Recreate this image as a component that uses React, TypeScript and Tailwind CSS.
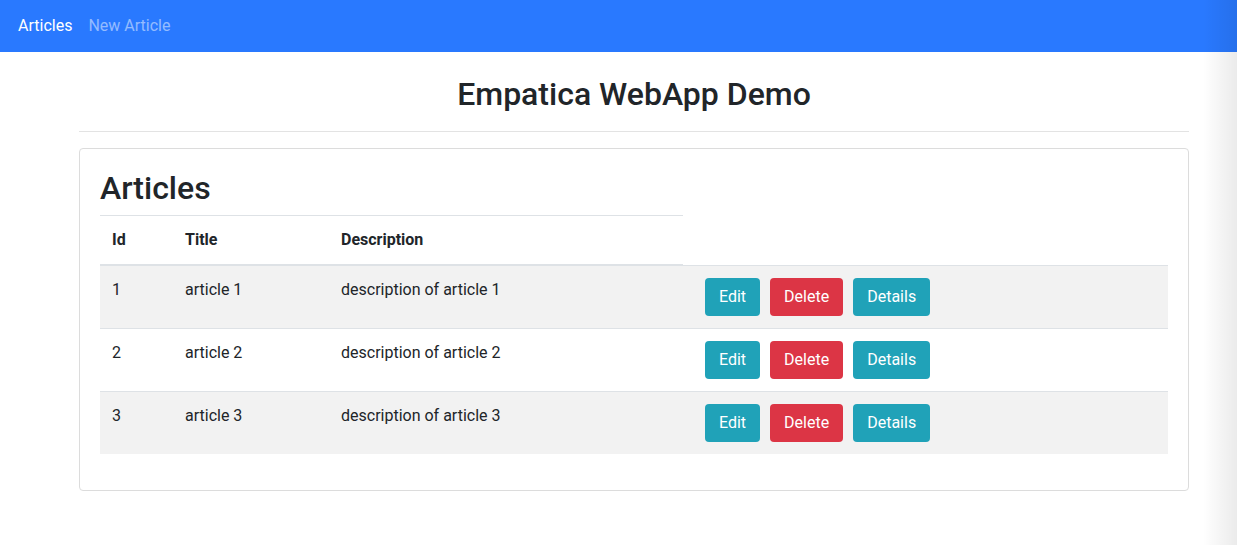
import React from 'react';

const articles = [
  { id: 1, title: 'article 1', description: 'description of article 1' },
  { id: 2, title: 'article 2', description: 'description of article 2' },
  { id: 3, title: 'article 3', description: 'description of article 3' },
];

const App = () => {
  return (
    <div
      className="relative min-h-[545px] bg-white text-[#212529] overflow-hidden"
      style={{ fontFamily: 'Roboto, "Liberation Sans", sans-serif' }}
    >
      <nav className="h-[52px] bg-[#2979ff] flex items-center px-[18px] gap-4 text-base">
        <a className="text-white">Articles</a>
        <a className="text-white/50">New Article</a>
      </nav>

      <div className="ml-[79px] w-[1110px]">
        <h2 className="text-center text-[32px] font-medium leading-[38px] pt-[23px] pb-[18px] border-b border-[#e3e3e3]">
          Empatica WebApp Demo
        </h2>

        <div className="mt-4 border border-[#dcdcdc] rounded p-5 pb-9">
          <h2 className="text-[32px] font-medium leading-[38px] mb-2">Articles</h2>
          <table className="w-full border-collapse text-base">
            <thead>
              <tr>
                <th className="text-left font-bold px-3 pt-3 pb-3 border-t border-b-2 border-[#dee2e6] w-[73px]">Id</th>
                <th className="text-left font-bold px-3 pt-3 pb-3 border-t border-b-2 border-[#dee2e6] w-[156px]">Title</th>
                <th className="text-left font-bold px-3 pt-3 pb-3 border-t border-b-2 border-[#dee2e6] w-[354px]">Description</th>
              </tr>
            </thead>
            <tbody>
              {articles.map((a) => (
                <tr key={a.id} className={`border-t border-[#dee2e6] ${a.id % 2 === 1 ? 'bg-[#f2f2f2]' : 'bg-white'}`}>
                  <td className="align-top px-3 py-3 leading-6">{a.id}</td>
                  <td className="align-top px-3 py-3 leading-6">{a.title}</td>
                  <td className="align-top px-3 py-3 leading-6">{a.description}</td>
                  <td className="align-top pl-[22px] pr-3 py-3">
                    <div className="flex gap-[10px]">
                      <button className="h-[38px] px-[14px] rounded bg-[#20a2b8] text-white">Edit</button>
                      <button className="h-[38px] px-[14px] rounded bg-[#dc3545] text-white">Delete</button>
                      <button className="h-[38px] px-[14px] rounded bg-[#20a2b8] text-white">Details</button>
                    </div>
                  </td>
                </tr>
              ))}
            </tbody>
          </table>
        </div>
      </div>

      <div className="pointer-events-none absolute top-0 right-0 h-full w-[34px] bg-gradient-to-r from-transparent to-black/[0.08]" />
    </div>
  );
};

export default App;
